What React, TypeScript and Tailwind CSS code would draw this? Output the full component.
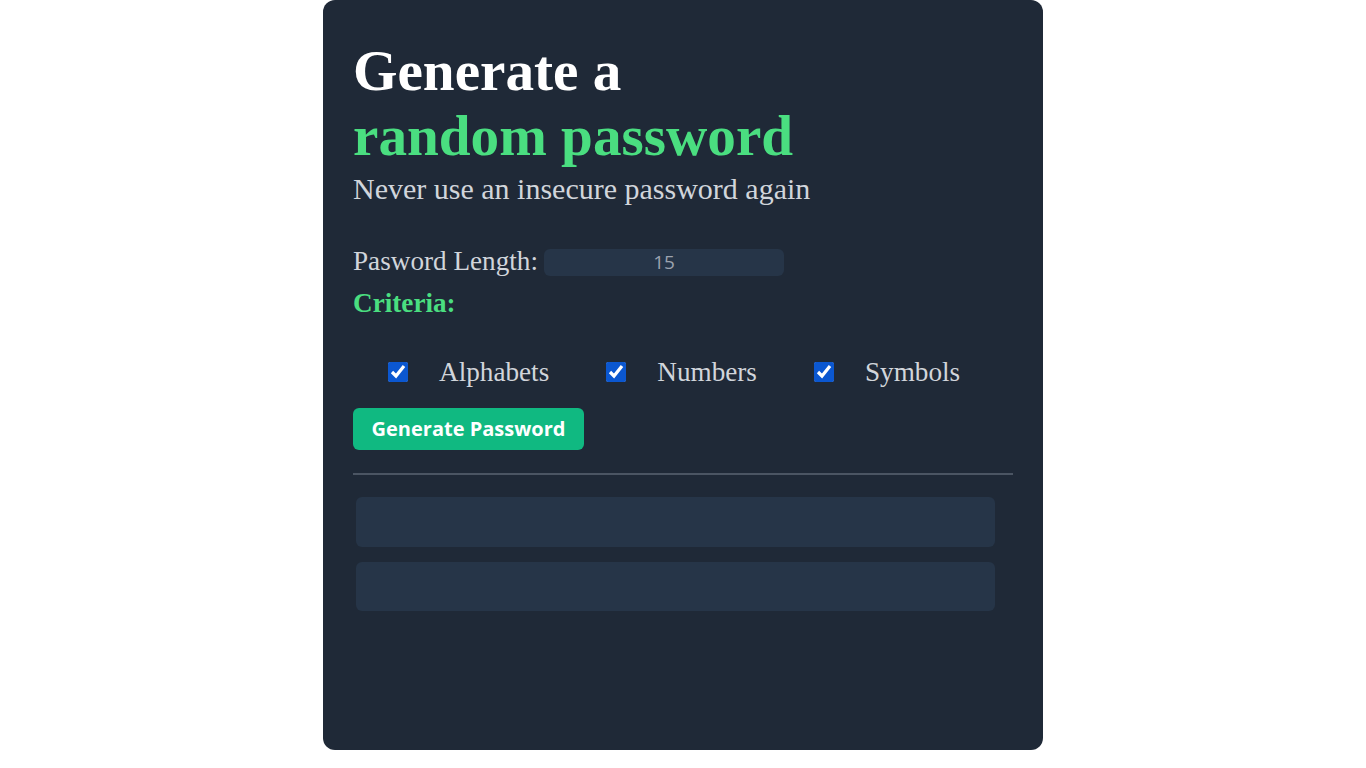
import React, { useState } from 'react';

const serif = { fontFamily: '"Liberation Serif", "Times New Roman", serif' };

const App: React.FC = () => {
  const [length, setLength] = useState(15);
  const [criteria, setCriteria] = useState({ alphabets: true, numbers: true, symbols: true });

  const toggle = (key: keyof typeof criteria) =>
    setCriteria((c) => ({ ...c, [key]: !c[key] }));

  return (
    <div className="min-h-screen bg-white flex justify-center">
      <div
        className="w-[720px] h-[750px] bg-[#1f2937] rounded-b-xl rounded-t-xl px-[30px] pt-[38px]"
        style={serif}
      >
        <h1 className="text-[57.2px] leading-[65px] font-bold text-white">
          Generate a
          <br />
          <span className="text-[#4ade80]">random password</span>
        </h1>
        <p className="text-[30px] leading-[34.5px] text-[#d1d5db] mt-[4px]">
          Never use an insecure password again
        </p>

        {/* Length */}
        <div className="flex items-start mt-[36px]">
          <label className="mt-[3px] text-[27.2px] leading-[31px] text-[#d1d5db]">Pasword Length:</label>
          <input
            type="number"
            value={length}
            onChange={(e) => setLength(Number(e.target.value))}
            className="ml-[6px] mt-[6px] w-[240px] h-[27px] rounded-md bg-[#263548] text-center text-[19px] text-[#9ca3af] outline-none [appearance:textfield] [&::-webkit-inner-spin-button]:appearance-none [&::-webkit-outer-spin-button]:appearance-none"
            style={{ fontFamily: '"Open Sans", sans-serif' }}
          />
        </div>

        <h2 className="text-[27.2px] leading-[31px] font-bold text-[#4ade80] mt-[11px]">Criteria:</h2>

        {/* Checkboxes */}
        <div className="flex items-center mt-[38px] pl-[35px] gap-[57px]">
          {(['alphabets', 'numbers', 'symbols'] as const).map((key) => (
            <label key={key} className="flex items-center gap-[31px] text-[27.2px] leading-[31px] text-[#d1d5db]">
              <input
                type="checkbox"
                checked={criteria[key]}
                onChange={() => toggle(key)}
                className="w-[20px] h-[20px] m-0 accent-[#0b57d0]"
              />
              {key.charAt(0).toUpperCase() + key.slice(1)}
            </label>
          ))}
        </div>

        <button
          className="mt-[20px] w-[231px] h-[42px] rounded-md bg-[#10b981] text-white text-[20px] font-bold"
          style={{ fontFamily: '"Open Sans", sans-serif' }}
        >
          Generate Password
        </button>

        <div className="mt-[23px] h-[2px] bg-[#4b5563]" />

        <div className="mt-[22px] pl-[3px] flex flex-col gap-[15px]">
          <div className="w-[639px] h-[50px] rounded-md bg-[#263548]" />
          <div className="w-[639px] h-[49px] rounded-md bg-[#263548]" />
        </div>
      </div>
    </div>
  );
};

export default App;
